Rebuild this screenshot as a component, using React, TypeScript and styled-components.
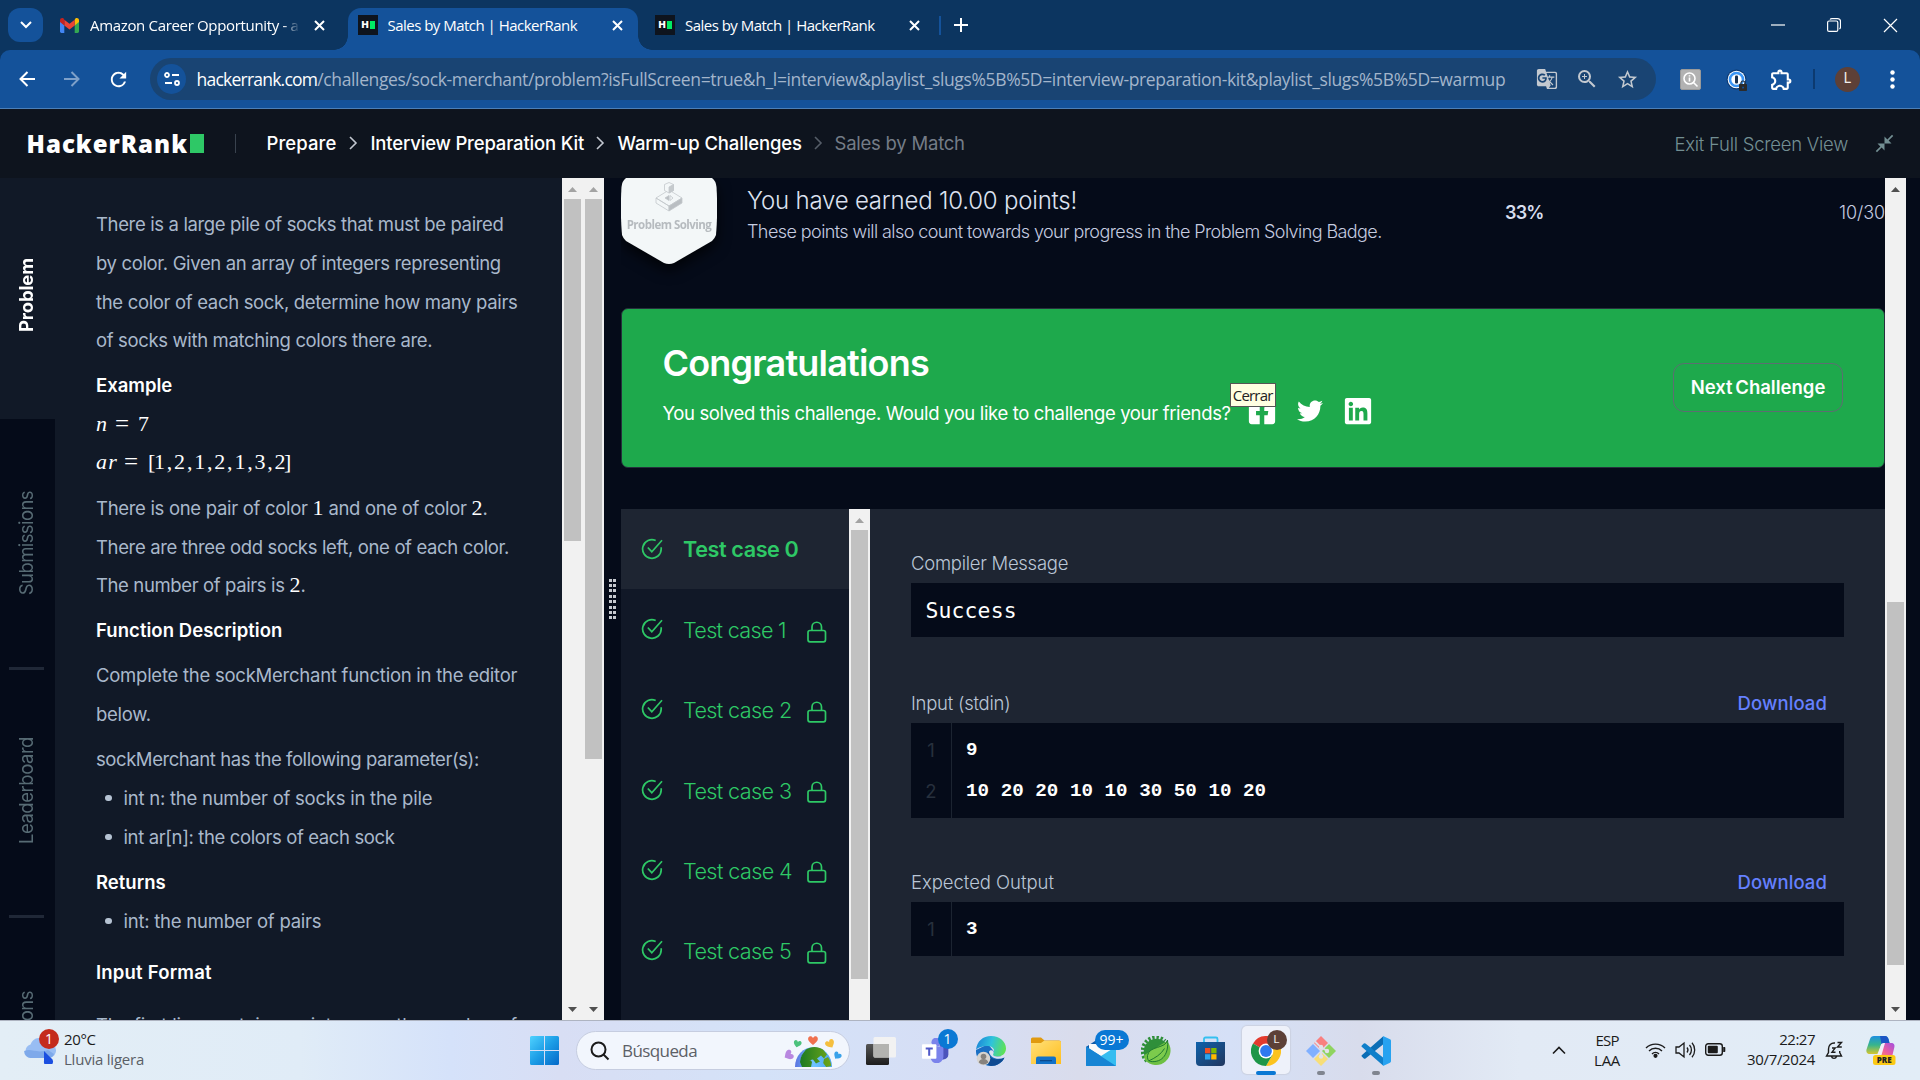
import React from 'react';
import styled, { createGlobalStyle, css } from 'styled-components';
import { FaTwitter, FaLinkedin, FaFacebookSquare } from 'react-icons/fa';
import { MdGTranslate, MdZoomIn, MdStarBorder, MdOutlineExtension, MdCloseFullscreen, MdRefresh, MdLock } from 'react-icons/md';

const ui = '"Open Sans", "Noto Sans", sans-serif';
const body = 'Inter, "Liberation Sans", sans-serif';

const Global = createGlobalStyle`
  * { box-sizing: border-box; }
  body { margin: 0; background: #050b19; overflow: hidden; }
  svg { display: block; flex: none; }
`;

const Screen = styled.div`
  width: 1920px;
  height: 1080px;
  display: grid;
  grid-template-rows: 50px 59px 69px 842px 60px;
  overflow: hidden;
  font-family: ${body};
`;

type TextProps = { $size?: number; $w?: number; $ls?: number; $ws?: number; $c?: string; $ml?: number };
const Text = styled.span<TextProps>`
  display: block;
  flex: none;
  white-space: nowrap;
  font-size: ${p => p.$size ?? 18.5}px;
  font-weight: ${p => p.$w ?? 400};
  letter-spacing: ${p => p.$ls ?? 0}px;
  word-spacing: ${p => p.$ws ?? 0}px;
  color: ${p => p.$c ?? '#fff'};
  margin-left: ${p => p.$ml ?? 0}px;
`;

/* ---------- browser chrome ---------- */

const TabStrip = styled.div`
  background: #0c3560;
  display: flex;
  align-items: center;
  padding-left: 8px;
  font-family: ${ui};
`;

const TabSearch = styled.div`
  width: 35px;
  height: 34px;
  border-radius: 12px;
  background: #14529a;
  display: flex;
  align-items: center;
  justify-content: center;
`;

const Tab = styled.div<{ $active?: boolean; $width: number; $pad: number }>`
  position: relative;
  align-self: flex-end;
  height: 42px;
  width: ${p => p.$width}px;
  padding: 0 0 8px ${p => p.$pad}px;
  display: flex;
  align-items: center;
  flex: none;
  ${p => p.$active && css`
    background: #14529a;
    border-radius: 13px 13px 0 0;
    &::before, &::after {
      content: '';
      position: absolute;
      bottom: 0;
      width: 14px;
      height: 14px;
    }
    &::before { left: -14px; background: radial-gradient(circle at 0 0, transparent 13.5px, #14529a 14px); }
    &::after { right: -14px; background: radial-gradient(circle at 100% 0, transparent 13.5px, #14529a 14px); }
  `}
`;

const TabTitle = styled(Text)<{ $width: number; $fade?: boolean }>`
  width: ${p => p.$width}px;
  overflow: hidden;
  ${p => p.$fade && css`mask-image: linear-gradient(90deg, #000 92%, transparent 100%);`}
`;

const Favicon = styled.div`
  width: 20px;
  height: 20px;
  background: #0e141e;
  display: flex;
  align-items: center;
  justify-content: center;
  flex: none;
  gap: 1px;
  color: #fff;
  font: 900 9.5px/10px ${body};
  &::after { content: ''; width: 5px; height: 8px; background: #00ea64; }
`;

const TabDivider = styled.div`
  width: 2px;
  height: 19px;
  margin-left: 17px;
  background: #14529a;
`;

const WindowButtons = styled.div`
  margin-left: auto;
  display: flex;
  align-items: center;
  gap: 42px;
  padding-right: 22px;
`;

const ToolbarBack = styled.div`
  background: #0c3560;
`;

const Toolbar = styled.div`
  height: 59px;
  background: #14529a;
  border-bottom: 1px solid #4b7fb8;
  border-radius: 10px 10px 0 0;
  display: flex;
  align-items: center;
  padding-left: 18px;
  font-family: ${ui};
  color: #fff;
`;

const NavIcons = styled.div`
  display: flex;
  gap: 26.5px;
  width: 132px;
  align-items: center;
`;

const UrlBar = styled.div`
  width: 1506px;
  height: 42px;
  border-radius: 21px;
  background: #194473;
  display: flex;
  align-items: center;
  padding: 0 17px 0 7px;
`;

const SiteInfo = styled.div`
  width: 29px;
  height: 30px;
  border-radius: 50%;
  background: #14529a;
  display: flex;
  align-items: center;
  justify-content: center;
  margin-right: 10.5px;
`;

const UrlIcons = styled.div`
  margin-left: auto;
  display: flex;
  align-items: center;
  gap: 17px;
  color: #c3c9d0;
`;

const ExtIcons = styled.div`
  display: flex;
  align-items: center;
  margin-left: 24px;
`;

const ExtSquare = styled.div`
  width: 21px;
  height: 21px;
  border-radius: 2px;
  background: #b2b2b2;
  border: 1px solid #9a9a9a;
  display: flex;
  align-items: center;
  justify-content: center;
`;

const PasswordExt = styled.div`
  width: 21px;
  height: 21px;
  margin-left: 25px;
  position: relative;
`;

const LockBadge = styled.div`
  position: absolute;
  right: -2px;
  bottom: -2px;
  color: #2b2b2b;
`;

const ExtDivider = styled.div`
  width: 2px;
  height: 20px;
  margin: 0 20px 0 19px;
  background: #0c3a70;
`;

const Avatar = styled.div<{ $size: number }>`
  width: ${p => p.$size}px;
  height: ${p => p.$size}px;
  border-radius: 50%;
  background: #5d4037;
  color: #f2eeec;
  display: flex;
  align-items: center;
  justify-content: center;
  font: 400 ${p => p.$size * 0.55}px/1 Roboto, sans-serif;
`;

/* ---------- page header ---------- */

const Header = styled.div`
  background: #0e141e;
  display: flex;
  align-items: center;
  padding: 0 25px 0 26.5px;
`;

const Logo = styled.div`
  display: flex;
  align-items: center;
  width: 208.5px;
  &::after {
    content: '';
    width: 14px;
    height: 19px;
    background: #2ec866;
    margin-left: 1.5px;
  }
`;

const LogoText = styled(Text)`
  font-family: ${ui};
`;

const Crumbs = styled.div`
  display: flex;
  align-items: center;
  border-left: 1px solid #39424e;
  height: 19px;
`;

const Crumb = styled(Text)<{ $width: number }>`
  width: ${p => p.$width}px;
  padding-bottom: 1px;
`;

const ExitLink = styled.div`
  margin-left: auto;
  display: flex;
  align-items: center;
  gap: 26px;
  color: #738f93;
`;

/* ---------- content ---------- */

const Content = styled.div`
  display: flex;
  background: #050b19;
  min-height: 0;
`;

const SideTabs = styled.div`
  width: 55px;
  height: 842px;
  overflow: hidden;
  display: flex;
  flex-direction: column;
  align-items: center;
  background: #050b19;
`;

const SideTab = styled.div<{ $h: number; $active?: boolean; $up?: number }>`
  width: 55px;
  height: ${p => p.$h}px;
  flex: none;
  display: flex;
  align-items: center;
  justify-content: center;
  padding: 0 3px ${p => p.$up ?? 0}px 0;
  background: ${p => (p.$active ? '#111927' : 'transparent')};
  span { writing-mode: vertical-rl; transform: rotate(180deg); line-height: 24px; }
`;

const SideRule = styled.div`
  width: 35px;
  height: 3px;
  margin-right: 2px;
  flex: none;
  background: #202837;
`;

const Statement = styled.div`
  width: 507px;
  height: 842px;
  overflow: hidden;
  background: #111927;
  padding: 27.4px 0 0 41px;
`;

const Line = styled.div<{ $mt?: number; $bold?: boolean; $ls?: number }>`
  height: 38.65px;
  line-height: 38.65px;
  margin-top: ${p => p.$mt ?? 0}px;
  font-size: 18.5px;
  font-weight: ${p => (p.$bold ? 600 : 400)};
  letter-spacing: ${p => p.$ls ?? (p.$bold ? 0 : -0.3)}px;
  color: ${p => (p.$bold ? '#fff' : '#a9b8cb')};
  white-space: nowrap;
`;

const Item = styled(Line)`
  display: flex;
  align-items: center;
  padding-left: 9px;
  &::before {
    content: '';
    width: 6.5px;
    height: 6.5px;
    border-radius: 50%;
    background: #b6c3d3;
    margin-right: 12px;
  }
`;

const Formula = styled.div`
  height: 38.65px;
  display: flex;
  align-items: center;
  font: 22px/38.65px "Liberation Serif", "Times New Roman", serif;
  color: #fff;
  white-space: nowrap;
`;

const Sym = styled.span<{ $width: number; $italic?: boolean; $ls?: number; $thin?: boolean }>`
  width: ${p => p.$width}px;
  font-style: ${p => (p.$italic ? 'italic' : 'normal')};
  letter-spacing: ${p => p.$ls ?? 0}px;
  font-size: ${p => (p.$thin ? 25 : 22)}px;
`;

const Num = styled.span`
  font: 22px/20px "Liberation Serif", "Times New Roman", serif;
  letter-spacing: 0;
  color: #fff;
`;

const Track = styled.div<{ $width?: number; $h?: number }>`
  width: ${p => p.$width ?? 21}px;
  height: ${p => p.$h ?? 842}px;
  flex: none;
  background: #f1f1f1;
  display: flex;
  flex-direction: column;
  align-items: center;
  padding: 9px 0 8px;
`;

const Arrow = styled.div<{ $down?: boolean; $dim?: boolean }>`
  width: 9px;
  height: 5px;
  flex: none;
  background: ${p => (p.$dim ? '#a3a3a3' : '#505050')};
  clip-path: ${p => (p.$down ? 'polygon(0 0, 100% 0, 50% 100%)' : 'polygon(50% 0, 100% 100%, 0 100%)')};
  margin-top: ${p => (p.$down ? 'auto' : 0)};
`;

const Thumb = styled.div<{ $h: number; $mt?: number }>`
  width: 17px;
  height: ${p => p.$h}px;
  flex: none;
  margin-top: ${p => p.$mt ?? 7}px;
  background: #c1c1c1;
`;

const Splitter = styled.div`
  width: 17px;
  display: flex;
  align-items: center;
  justify-content: center;
`;

const Grip = styled.div`
  display: grid;
  grid-template-columns: 3px 3px;
  gap: 2.4px 1.5px;
  i { height: 3px; background: #c6c9cf; }
`;

const Results = styled.div`
  width: 1264px;
  height: 842px;
  overflow: hidden;
  display: flex;
  flex-direction: column;
`;

const PointsRow = styled.div`
  height: 130px;
  display: flex;
  align-items: flex-start;
  flex: none;
`;

const BadgeShadow = styled.div`
  filter: drop-shadow(0 6px 7px rgba(0, 0, 0, 0.75));
`;

const Badge = styled.div`
  width: 96px;
  height: 87px;
  background: #f3f7f8;
  clip-path: path('M5 0 L91 0 Q95 3 95.5 9 Q97 34 95 57 Q94 60 91 63 L53 85 Q48 87 43 85 L5 63 Q2 60 1 57 Q-1 34 0.5 9 Q1 3 5 0 Z');
  display: flex;
  flex-direction: column;
  align-items: center;
  padding-top: 4px;
`;

const BadgeText = styled(Text)`
  font-family: ${ui};
  line-height: 14px;
  margin-top: 6px;
`;

const PointsText = styled.div`
  margin-left: 30px;
  width: 758px;
  padding-top: 8px;
  display: flex;
  flex-direction: column;
  gap: 6px;
`;

const ScoreRow = styled.div`
  flex: 1;
  display: flex;
  justify-content: space-between;
  padding-top: 24px;
`;

const Congrats = styled.div`
  width: 1264px;
  height: 160px;
  flex: none;
  margin-bottom: 41px;
  border: 1px solid #26303c;
  border-radius: 7px;
  background: #1ea94c;
  display: flex;
  align-items: center;
  justify-content: space-between;
  padding: 0 41px 2px 40.5px;
`;

const CongratsText = styled.div`
  padding-bottom: 6px;
`;

const Share = styled.div`
  display: flex;
  align-items: center;
  height: 30px;
  margin-top: 13px;
  color: #fff;
`;

const ShareIcon = styled.div<{ $ml: number }>`
  position: relative;
  margin-left: ${p => p.$ml}px;
  margin-top: -4px;
`;

const Tooltip = styled.div`
  position: absolute;
  left: -17px;
  top: -13px;
  width: 46px;
  height: 24px;
  background: #ffffe1;
  border: 1px solid #555;
  display: flex;
  align-items: center;
  justify-content: center;
  font-family: ${ui};
`;

const NextButton = styled.div`
  width: 170px;
  height: 49px;
  border: 1px solid #5c6e71;
  border-radius: 11px;
  display: flex;
  align-items: center;
  justify-content: center;
`;

const TestPanel = styled.div`
  display: flex;
  height: 511px;
  flex: none;
`;

const CaseList = styled.div`
  width: 228px;
  background: #111827;
  overflow: hidden;
`;

const Case = styled.div<{ $active?: boolean }>`
  height: 80.2px;
  padding-left: 20px;
  display: flex;
  align-items: center;
  background: ${p => (p.$active ? '#1e2532' : 'transparent')};
`;

const CaseName = styled(Text)<{ $low: boolean }>`
  width: 124px;
  margin-left: 20px;
  padding-top: ${p => (p.$low ? 2 : 0)}px;
`;

const LockSlot = styled.div`
  padding-top: 5px;
`;

const Detail = styled.div`
  width: 1015px;
  background: #1e2532;
  padding: 42px 41px 0;
`;

const LabelRow = styled.div<{ $mt?: number }>`
  height: 24px;
  margin: ${p => p.$mt ?? 0}px 0 8px;
  padding-right: 17px;
  display: flex;
  align-items: center;
  justify-content: space-between;
`;

const Message = styled.div`
  height: 54px;
  background: #050b19;
  padding-left: 14.5px;
  display: flex;
  align-items: center;
  font: 21.4px "DejaVu Sans Mono", monospace;
  letter-spacing: 0.15px;
  color: #fff;
`;

const Code = styled.div`
  background: #050b19;
  background-image: linear-gradient(#1c2431, #1c2431);
  background-size: 1px 100%;
  background-position: 40px 0;
  background-repeat: no-repeat;
  padding: 6px 0 7px;
`;

const CodeRow = styled.div`
  height: 41px;
  display: grid;
  grid-template-columns: 55px 1fr;
  align-items: center;
  font: 700 19.2px "Liberation Mono", monospace;
  letter-spacing: 0.03px;
  color: #fff;
  white-space: pre;
`;

const LineNo = styled.span`
  width: 40px;
  text-align: center;
  font: 400 18.5px ${body};
  color: #27303d;
`;

/* ---------- taskbar ---------- */

const Taskbar = styled.div`
  border-top: 1px solid #aeb4c1;
  background: linear-gradient(90deg, #e3eef6 0, #e0ecf7 300px, #d5e2fa 450px, #d8def4 560px, #d4e2f8 760px, #d6def5 960px, #d9dcec 1080px, #d5e0f7 1230px, #d8dcec 1360px, #e2eaf5 1520px, #e2edf7 100%);
  display: flex;
  align-items: center;
  font-family: ${ui};
  color: #1b1b1b;
`;

const Weather = styled.div`
  width: 517px;
  height: 59px;
  padding: 0 0 3px 24px;
  display: flex;
  align-items: center;
`;

const WeatherIcon = styled.div`
  position: relative;
  width: 40px;
`;

const CountBadge = styled.div<{ $w: number; $x: number; $y: number; $bg: string }>`
  position: absolute;
  left: ${p => p.$x}px;
  top: ${p => p.$y}px;
  width: ${p => p.$w}px;
  height: 20px;
  border-radius: 10px;
  background: ${p => p.$bg};
  color: #fff;
  font: 400 14px/20px ${ui};
  text-align: center;
`;

const TwoLines = styled.div<{ $align: string; $ml?: number; $up: number }>`
  display: flex;
  flex-direction: column;
  align-items: ${p => p.$align};
  line-height: 20px;
  padding-bottom: ${p => p.$up}px;
  margin-left: ${p => p.$ml ?? 0}px;
`;

const Slot = styled.div<{ $on?: boolean; $run?: boolean }>`
  width: 55px;
  height: 59px;
  flex: none;
  display: flex;
  align-items: center;
  justify-content: center;
  position: relative;
  ${p => p.$on && css`
    &::before {
      content: '';
      position: absolute;
      left: 4px; right: 3px; top: 5px; bottom: 6px;
      border-radius: 5px;
      background: #eef1fa;
      box-shadow: 0 0 1px 1px #ccd2e2;
    }
  `}
  ${p => (p.$on || p.$run) && css`
    &::after {
      content: '';
      position: absolute;
      left: 50%;
      bottom: 5px;
      width: ${p.$on ? 20 : 8}px;
      height: 4px;
      margin-left: ${p.$on ? -9.5 : -3.5}px;
      border-radius: 2px;
      background: ${p.$on ? '#0a78d4' : '#80858f'};
    }
  `}
`;

const Layer = styled.div`
  position: relative;
`;

const AvatarBadge = styled.div`
  position: absolute;
  left: 16px;
  top: -6px;
`;

const SearchPill = styled.div`
  width: 274px;
  height: 39px;
  margin: 0 3px 0 4px;
  border-radius: 20px;
  background: #f2f6fd;
  border: 1px solid #c6cde0;
  display: flex;
  align-items: center;
  padding: 0 7px 0 13px;
  overflow: hidden;
`;

const Doodle = styled.div`
  margin-left: auto;
`;

const Tray = styled.div`
  margin-left: auto;
  display: flex;
  align-items: center;
  padding-right: 24px;
`;

const TrayIcons = styled.div`
  display: flex;
  gap: 9px;
  margin: 0 21px 2px 25px;
  align-items: center;
`;

const Bell = styled.div`
  margin: 0 22px 1px 10px;
`;

/* ---------- drawings ---------- */

const Cross = ({ s = 10, w = 2 }: { s?: number; w?: number }) => (
  <svg width={s + 2} height={s + 2} viewBox={`-1 -1 ${s + 2} ${s + 2}`} stroke="#fff" strokeWidth={w}>
    <path d={`M0 0L${s} ${s}M${s} 0L0 ${s}`} />
  </svg>
);

const Gmail = () => (
  <svg width="19" height="15" viewBox="0 0 19 15">
    <path d="M0 3v10.5A1.4 1.4 0 0 0 1.4 15H4.300V7z" fill="#4285f4" />
    <path d="M19 3v10.500a1.400 1.400 0 0 1-1.400 1.500H14.700V7z" fill="#34a853" />
    <path d="M14.700 1.800V7.500L19 4V2.200c0-2-2.200-2.800-3.600-1.700z" fill="#fbbc04" />
    <path d="M4.300 7.500V1.800l5.200 4 5.200-4v5.700l-5.200 4z" fill="#ea4335" />
    <path d="M0 2.200V4l4.300 3.500V1.800L3.600.5C2.200-.6 0 .2 0 2.200z" fill="#c5221f" />
  </svg>
);

const Chevron = ({ c = '#c2c7d0' }: { c?: string }) => (
  <svg width="9" height="15" viewBox="0 0 9 15" fill="none" stroke={c} strokeWidth="1.6"><path d="M1 1l6 6-6 6" /></svg>
);

const CheckIcon = () => (
  <svg width="22" height="22" viewBox="0 0 22 22" fill="none" stroke="#2ec866" strokeWidth="1.700">
    <path d="M20.200 9.200v1.800A9.300 9.300 0 1 1 14.700 2.500" /><path d="M6.800 9.500l4 4.200L21 2.200" />
  </svg>
);

const LockIcon = () => (
  <svg width="20" height="22" viewBox="0 0 20 22" fill="none" stroke="#2ec866" strokeWidth="1.700">
    <rect x="1" y="9.500" width="17.500" height="11.300" rx="2" /><path d="M5 9.500V6a4.750 4.750 0 0 1 9.500 0v3.500" />
  </svg>
);

const BadgeArt = () => (
  <svg width="30" height="30" viewBox="0 0 30 30" fill="none" stroke="#c3c8cb" strokeWidth="0.800">
    <path d="M2 16l13-8 13 8-13 8z" /><path d="M2 16v5l13 8v-5z" />
    <path d="M28 16v5l-13 8v-5z" fill="#b9bec2" />
    <path d="M10.500 2.500L15 .500l4.500 2v6L15 11l-4.500-2.500z" fill="#f3f7f8" /><path d="M15 5l4.500-2.500v6L15 11z" fill="#c5cacd" />
    <path d="M11 16l4-2.500v5z" fill="#b9bec2" /><path d="M16 13.500l3 2.500-3 2.500z" />
  </svg>
);

const WindowsLogo = () => (
  <svg width="30" height="30" viewBox="0 0 30 30">
    <defs><linearGradient id="win" x1="0" y1="0" x2="1" y2="1"><stop offset="0" stopColor="#4fd2ff" /><stop offset=".5" stopColor="#1c9de6" /><stop offset="1" stopColor="#0468c8" /></linearGradient></defs>
    <path fill="url(#win)" d="M1.500 0H14v14H0V1.500A1.500 1.500 0 0 1 1.500 0zM15 0h12.500A1.500 1.500 0 0 1 29 1.500V14H15zM0 15h14v14H1.500A1.500 1.500 0 0 1 0 27.500zM15 15h14v12.500a1.500 1.500 0 0 1-1.500 1.500H15z" />
  </svg>
);

const heart = 'M0-1.800C-1.500-5.500-6-3.500-4.600.2-3.800 2.200-1.500 3.400 0 5 1.500 3.400 3.800 2.200 4.600.2 6-3.500 1.500-5.500 0-1.800z';
const EarthDoodle = () => (
  <svg width="58" height="34" viewBox="0 0 58 34">
    <defs><linearGradient id="sea" x1="0" x2="1"><stop offset="0" stopColor="#5b74e0" /><stop offset=".5" stopColor="#6fc4ff" /><stop offset="1" stopColor="#4ba3f2" /></linearGradient>
      <linearGradient id="land" x1="0" x2="1"><stop offset="0" stopColor="#1c7a22" /><stop offset="1" stopColor="#6fa61a" /></linearGradient></defs>
    <path d="M11 33a18.500 20 0 0 1 37 0z" fill="url(#sea)" />
    <path d="M22 15.500c5-3.500 12-3.500 17 0l4 5-3 4-3-3-4 3 3 3-4 2-3-4-5 1-4-3-3-1 2-3zM17 23c4-1 9 2 11 5l-1 5h-9l-2-5zM40 25l4-2c2 3 3 6 3.200 9l-5 1-3-4z" fill="url(#land)" />
    <path d={heart} fill="#f0714f" transform="translate(29 6)" />
    <path d={heart} fill="#4cc27c" transform="translate(13.500 9.500) rotate(15) scale(.8)" />
    <path d={heart} fill="#f5bf3f" transform="translate(46 9.500) rotate(-30) scale(.95)" />
    <path d={heart} fill="#b887e0" transform="translate(5 21) rotate(60) scale(1)" />
    <path d={heart} fill="#3aa2ea" transform="translate(53.500 21.500) rotate(35) scale(.8)" />
  </svg>
);

const TaskView = () => (
  <svg width="30" height="28" viewBox="0 0 30 28">
    <defs><linearGradient id="tv" x1="0" y1="0" x2="0" y2="1"><stop offset="0" stopColor="#555" /><stop offset="1" stopColor="#1d1d1d" /></linearGradient></defs>
    <rect x="0" y="7" width="23" height="21" rx="1.500" fill="url(#tv)" />
    <rect x="7.500" y="0" width="22.500" height="20.500" rx="1.500" fill="#f2f2f2" />
    <path d="M7.500 7H23v13.500H9A1.500 1.500 0 0 1 7.500 19z" fill="#b3b3b0" />
  </svg>
);

const Teams = () => (
  <svg width="28" height="25" viewBox="0 0 34 30">
    <circle cx="25" cy="7" r="4" fill="#5059c9" />
    <path d="M22 10h10v10a6 6 0 0 1-6 6h-4z" fill="#4b53bc" />
    <circle cx="17" cy="5" r="5.500" fill="#7b83eb" />
    <path d="M10 10h16v12.500A8 8 0 0 1 18 30.500 8 8 0 0 1 10 23z" fill="#7b83eb" />
    <rect x="0" y="7.500" width="17.500" height="17.500" rx="1" fill="#fff" />
    <path d="M4.500 11.500h8.600v2.300H10v7.700H7.500v-7.700h-3z" fill="#5059c9" />
  </svg>
);

const Edge = () => (
  <svg width="30" height="30" viewBox="0 0 30 30">
    <defs><linearGradient id="eg" x1="0" y1=".3" x2="1" y2=".5"><stop offset="0" stopColor="#1b86d8" /><stop offset=".5" stopColor="#2fc3dc" /><stop offset="1" stopColor="#5fe254" /></linearGradient></defs>
    <path d="M0 14a15 15 0 0 0 15 16c6 0 11-3 13.500-8.500L20 18 12 8z" fill="#1a6fc4" />
    <path d="M0 14C1 5 7 0 15 0c9 0 15 6 15 12.500 0 5-4 8-8 8-4 0-6.500-1.200-5-3 3-3.500-.5-7.500-5-7.500C6.500 10 1 12 0 14z" fill="url(#eg)" />
    <path d="M28.500 21.500C26 27 20.500 30 15 30 9 29 9 20 13 15.500c-1 6 6 10.500 15.500 6z" fill="#0f4a91" />
    <path d="M17.500 17.500C16 19.800 19 20.500 22 20.500c3.500 0 6-1.500 7.500-3.500 0 2-.3 3-1 4.500-7 3-14 .5-15.500-5.500.5-3 6-2 4.500 1.500z" fill="#dbe0f0" />
    <circle cx="7.500" cy="22.500" r="6.800" fill="#d6d3cf" /><circle cx="7.500" cy="20.500" r="2.800" fill="#86827e" /><path d="M2.800 26.500a4.700 3.500 0 0 1 9.400 0 6.800 6.800 0 0 1-9.400 0z" fill="#86827e" />
  </svg>
);

const Folder = () => (
  <svg width="30" height="28" viewBox="0 0 30 28">
    <defs><linearGradient id="fo" x1="0" y1="0" x2="1" y2="1"><stop offset="0" stopColor="#ffe07a" /><stop offset="1" stopColor="#ffbe1e" /></linearGradient></defs>
    <path d="M0 2A1.500 1.500 0 0 1 1.500.5H10l3.500 3H28a2 2 0 0 1 2 2V12H0z" fill="#e09a10" />
    <path d="M0 6h10l3-2.200h15.500A1.500 1.500 0 0 1 30 5.300V27H0z" fill="url(#fo)" />
    <path d="M5 27v-5.500A2 2 0 0 1 7 19.500h16a2 2 0 0 1 2 2V27z" fill="#1272c8" /><path d="M9 23h12v1.300H9z" fill="#0b4a8c" />
  </svg>
);

const Mail = () => (
  <svg width="30" height="30" viewBox="0 0 30 30">
    <path d="M0 11L15 1l15 10v4H0z" fill="#0d5aa8" /><path d="M3 8h24v9l-12 8L3 16z" fill="#fafafa" />
    <path d="M0 10.500L19 22.500 30 30H0z" fill="#1b8ad8" /><path d="M30 10.500V30L0 29.500z" fill="#36bdf0" /><path d="M0 10.500L30 30H1.500A1.500 1.500 0 0 1 0 28.500z" fill="#1785d4" />
  </svg>
);

const Spring = () => (
  <svg width="30" height="30" viewBox="0 0 30 30">
    <path d="M6 25A13.300 13.300 0 0 1 24 5" fill="none" stroke="#2f8f3a" strokeWidth="4" strokeDasharray="2.300 1.780" />
    <circle cx="15.500" cy="15.500" r="12.800" fill="#2f8f3a" />
    <path d="M26 5A14.500 14.500 0 1 1 4 24c-1-2-1-4-.5-5z" fill="#6ec043" />
    <path d="M26.500 4C25 13 8 9.500 6.500 19.500 6 23 7.500 25 9.500 25.500 22 27 28 17 26.500 4z" fill="#7ccb4c" stroke="#1f7a31" strokeWidth="1" />
    <path d="M7.500 25C14 22 20 18.500 23.500 12.500" stroke="#1f7a31" fill="none" strokeWidth="1" />
  </svg>
);

const Store = () => (
  <svg width="30" height="30" viewBox="0 0 30 30">
    <defs><linearGradient id="st" x1="0" y1="0" x2="1" y2="1"><stop offset="0" stopColor="#0f62ab" /><stop offset="1" stopColor="#21365e" /></linearGradient></defs>
    <path d="M8 7V3a1.500 1.500 0 0 1 1.500-1.500h10.500A1.500 1.500 0 0 1 21.500 3v4" fill="none" stroke="#35c0f0" strokeWidth="1.800" />
    <path d="M0 6h29v20a4 4 0 0 1-4 4H4a4 4 0 0 1-4-4z" fill="url(#st)" />
    <path d="M9 12h5.300v5.300H9z" fill="#f25022" /><path d="M15.200 12h5.300v5.300h-5.300z" fill="#7fba00" /><path d="M9 18.200h5.300v5.300H9z" fill="#2ba6ee" /><path d="M15.200 18.200h5.300v5.300h-5.300z" fill="#ffb900" />
  </svg>
);

const Chrome = () => (
  <svg width="30" height="30" viewBox="0 0 30 30">
    <path d="M15 15L2 7.500A15 15 0 0 1 28 7.500z" fill="#e33b2e" /><path d="M15 15l13-7.500A15 15 0 0 1 15 30l6.500-11.300z" fill="#fcc31e" />
    <path d="M2 7.500A15 15 0 0 0 15 30l6.500-11.300L15 15z" fill="#1e9648" /><path d="M15 8h13.200A15 15 0 0 1 30 15l-8.500 3.700z" fill="#fcc31e" />
    <circle cx="15" cy="15" r="7.400" fill="#fff" /><circle cx="15" cy="15" r="5.900" fill="#2f79ee" />
  </svg>
);

const GitIcon = () => (
  <svg width="30" height="30" viewBox="0 0 30 30">
    <path d="M15 0l7 7-7 7-7-7z" fill="#f98080" /><path d="M15 16l7 7-7 7-7-7z" fill="#f7de78" /><path d="M7 8l7 7-7 7-7-7z" fill="#80b0ff" /><path d="M23 8l7 7-7 7-7-7z" fill="#8fd460" />
    <path d="M9 5.500l3.500 3.500 2.500 2 6 4M15 11v10" stroke="#dfe0ea" strokeWidth="1.800" fill="none" /><circle cx="15" cy="11" r="2.200" fill="#e2e2ea" /><circle cx="15" cy="20.500" r="2.200" fill="#e2e2ea" /><circle cx="21" cy="15" r="2.200" fill="#e2e2ea" />
  </svg>
);

const VsCode = () => (
  <svg width="30" height="30" viewBox="0 0 30 30">
    <path d="M22 8.500L4.500 22.500a1.300 1.300 0 0 1-1.700 0l-1.800-1.700a1.300 1.300 0 0 1 0-1.900L22 .5z" fill="#0a6db5" />
    <path d="M22 21.500L4.500 7.500a1.300 1.300 0 0 0-1.700 0L1 9.200a1.300 1.300 0 0 0 0 1.900L22 29.500z" fill="#0f7fca" />
    <path d="M22 0l7 3.200a1.800 1.800 0 0 1 1 1.700v20.200a1.800 1.800 0 0 1-1 1.700L22 30z" fill="#27a2f0" />
  </svg>
);

const Copilot = () => (
  <svg width="30" height="29" viewBox="0 0 30 29">
    <defs><linearGradient id="cp1" x1="0" y1="0" x2="0" y2="1"><stop offset="0" stopColor="#1d8fe0" /><stop offset=".5" stopColor="#37b58c" /><stop offset="1" stopColor="#d6c62e" /></linearGradient>
      <linearGradient id="cp2" x1="1" y1="0" x2="0" y2="1"><stop offset="0" stopColor="#a24fe0" /><stop offset=".6" stopColor="#ef5f9c" /><stop offset="1" stopColor="#f9955c" /></linearGradient></defs>
    <path d="M8 0h11c2 0 3 1.500 3.500 3l1 4H18c-2 0-3 1-3.500 3l-2 8H4c-3 0-4-2-3.500-4.500L4 3c.6-2 2-3 4-3z" fill="url(#cp1)" />
    <path d="M14 0h5c2 0 3 1.500 3.500 3l1 4H18l-2.500 1z" fill="#1c55c4" />
    <path d="M19 7h6c3 0 4 2 3.300 4.500L26 21H13l3-11c.5-2 1.500-3 3-3z" fill="url(#cp2)" />
    <path d="M15.500 8c1-1 2-1 3.500-1l-3.500 12H11z" fill="#f3eef8" />
    <rect x="7" y="19" width="22.500" height="10" rx="2.500" fill="#fbc914" />
    <text x="18.200" y="27.200" textAnchor="middle" fontFamily="Open Sans" fontWeight="800" fontSize="8" fill="#222">PRE</text>
  </svg>
);

/* ---------- page ---------- */

const cases = [-0.4, -0.7, -0.62, -0.62, -0.6, -0.62];

export default function App() {
  return (
    <Screen>
      <Global />
      <TabStrip>
        <TabSearch>
          <svg width="12" height="8" viewBox="0 0 12 8" fill="none" stroke="#fff" strokeWidth="2"><path d="M1 1l5 5 5-5" /></svg>
        </TabSearch>
        <Tab $width={305} $pad={17}>
          <Gmail />
          <TabTitle $size={15} $ls={-0.33} $ml={11} $width={210} $fade>Amazon Career Opportunity - a</TabTitle>
          <Text $ml={14}><Cross s={9} /></Text>
        </Tab>
        <Tab $active $width={290} $pad={10}>
          <Favicon>H</Favicon>
          <TabTitle $size={15} $ls={-0.52} $ml={9.5} $width={224}>Sales by Match | HackerRank</TabTitle>
          <Cross s={9} />
        </Tab>
        <Tab $width={284} $pad={17}>
          <Favicon>H</Favicon>
          <TabTitle $size={15} $ls={-0.52} $ml={10} $width={224}>Sales by Match | HackerRank</TabTitle>
          <Cross s={9} />
        </Tab>
        <TabDivider />
        <Text $ml={13}>
          <svg width="14" height="14" viewBox="0 0 14 14" stroke="#fff" strokeWidth="2"><path d="M7 0v14M0 7h14" /></svg>
        </Text>
        <WindowButtons>
          <svg width="14" height="14" viewBox="0 0 14 14" stroke="#fff" strokeWidth="1.200"><path d="M0 7h14" /></svg>
          <svg width="14" height="14" viewBox="0 0 14 14" fill="none" stroke="#fff" strokeWidth="1.200"><rect x=".6" y="3" width="10.200" height="10.400" rx="1.500" /><path d="M3 1.500C3.500.8 4 .6 5 .6h5.500a3 3 0 0 1 3 3V9c0 1-.3 1.500-1 2" /></svg>
          <Cross s={13} w={1.2} />
        </WindowButtons>
      </TabStrip>

      <ToolbarBack>
        <Toolbar>
          <NavIcons>
            <svg width="18" height="18" viewBox="0 0 18 18" fill="none" stroke="#fff" strokeWidth="2"><path d="M17 9H3M9.500 2L2.500 9l7 7" /></svg>
            <svg width="18" height="18" viewBox="0 0 18 18" fill="none" stroke="#7ea0c9" strokeWidth="2"><path d="M1 9h14M8.500 2l7 7-7 7" /></svg>
            <MdRefresh size={23} />
          </NavIcons>
          <UrlBar>
            <SiteInfo>
              <svg width="16" height="14" viewBox="0 0 16 14" fill="none" stroke="#fff" strokeWidth="1.800"><circle cx="3" cy="3" r="2" /><path d="M8 3h7M1 11h7" /><circle cx="13" cy="11" r="2" /></svg>
            </SiteInfo>
            <Text $size={17.5} $ls={-0.77}>hackerrank.com</Text>
            <Text $size={17.5} $ls={-0.365} $c="#a3b5cb">/challenges/sock-merchant/problem?isFullScreen=true&amp;h_l=interview&amp;playlist_slugs%5B%5D=interview-preparation-kit&amp;playlist_slugs%5B%5D=warmup</Text>
            <UrlIcons>
              <MdGTranslate size={22} />
              <MdZoomIn size={24} />
              <MdStarBorder size={23} />
            </UrlIcons>
          </UrlBar>
          <ExtIcons>
            <ExtSquare>
              <svg width="17" height="17" viewBox="0 0 17 17" fill="none" stroke="#fff" strokeWidth="1.600"><circle cx="7.500" cy="7.500" r="5.500" /><path d="M11.500 11.500l4 4M7.500 6.500v4M7.500 4.200v1.300" /></svg>
            </ExtSquare>
            <PasswordExt>
              <svg width="21" height="21" viewBox="0 0 21 21"><circle cx="10.500" cy="10.500" r="10" fill="#0d3a73" /><circle cx="10.500" cy="10.500" r="8.800" fill="#fff" /><circle cx="10.500" cy="10.500" r="6.500" fill="#fff" stroke="#3a95f5" strokeWidth="2.600" /><rect x="9" y="6.500" width="3" height="8" rx="1" fill="#17304f" /></svg>
              <LockBadge><MdLock size={12} /></LockBadge>
            </PasswordExt>
            <Text $ml={22}><MdOutlineExtension size={25} /></Text>
            <ExtDivider />
            <Avatar $size={25}>L</Avatar>
            <Text $ml={30}>
              <svg width="5" height="19" viewBox="0 0 5 19" fill="#fff"><circle cx="2.500" cy="2.500" r="2.200" /><circle cx="2.500" cy="9.500" r="2.200" /><circle cx="2.500" cy="16.500" r="2.200" /></svg>
            </Text>
          </ExtIcons>
        </Toolbar>
      </ToolbarBack>

      <Header>
        <Logo><LogoText $size={24} $w={800} $ls={1.02}>HackerRank</LogoText></Logo>
        <Crumbs>
          <Crumb $width={82} $ml={30.5} $w={500} $ls={0.09}>Prepare</Crumb>
          <Chevron />
          <Crumb $width={225} $ml={13} $w={500} $ls={-0.18}>Interview Preparation Kit</Crumb>
          <Chevron />
          <Crumb $width={196} $ml={13} $w={500} $ls={-0.13}>Warm-up Challenges</Crumb>
          <Chevron c="#555d68" />
          <Crumb $width={140} $ml={12} $ls={-0.23} $c="#747c87">Sales by Match</Crumb>
        </Crumbs>
        <ExitLink>
          <Text $w={300} $ls={-0.26} $c="#738f93">Exit Full Screen View</Text>
          <MdCloseFullscreen size={21} />
        </ExitLink>
      </Header>

      <Content>
        <SideTabs>
          <SideTab $h={241} $up={6} $active><Text $w={700} $ls={-0.14}>Problem</Text></SideTab>
          <SideTab $h={248}><Text $ls={-0.58} $c="#576b74">Submissions</Text></SideTab>
          <SideRule />
          <SideTab $h={245} $up={4}><Text $ls={-0.46} $c="#576b74">Leaderboard</Text></SideTab>
          <SideRule />
          <SideTab $h={250} $up={4}><Text $ls={-0.5} $c="#576b74">Discussions</Text></SideTab>
        </SideTabs>
        <Statement>
          <Line $ls={-0.36}>There is a large pile of socks that must be paired</Line>
          <Line $ls={-0.35}>by color. Given an array of integers representing</Line>
          <Line $ls={-0.33}>the color of each sock, determine how many pairs</Line>
          <Line $ls={-0.35}>of socks with matching colors there are.</Line>
          <Line $bold $mt={6} $ls={0}>Example</Line>
          <Formula><Sym $width={19} $italic>n</Sym><Sym $width={23} $thin>=</Sym><Sym $width={12}>7</Sym></Formula>
          <Formula><Sym $width={28} $italic $ls={1.2}>ar</Sym><Sym $width={24} $thin>=</Sym><Sym $width={6}>[</Sym><Sym $width={130} $ls={1.8}>1,2,1,2,1,3,2</Sym><Sym $width={8}>]</Sym></Formula>
          <Line $mt={7} $ls={-0.31}>There is one pair of color <Num>1</Num> and one of color <Num>2</Num>.</Line>
          <Line $ls={-0.36}>There are three odd socks left, one of each color.</Line>
          <Line $ls={-0.38}>The number of pairs is <Num>2</Num>.</Line>
          <Line $bold $mt={6.5} $ls={0.05}>Function Description</Line>
          <Line $mt={6.5} $ls={-0.25}>Complete the sockMerchant function in the editor</Line>
          <Line>below.</Line>
          <Line $mt={6.5} $ls={-0.43}>sockMerchant has the following parameter(s):</Line>
          <Item $ls={-0.24}>int n: the number of socks in the pile</Item>
          <Item $ls={-0.38}>int ar[n]: the colors of each sock</Item>
          <Line $bold $mt={7}>Returns</Line>
          <Item $ls={-0.24}>int: the number of pairs</Item>
          <Line $bold $mt={13} $ls={0.2}>Input Format</Line>
          <Line $mt={14} $ls={-0.2}>The first line contains an integer n, the number of</Line>
        </Statement>
        <Track><Arrow $dim /><Thumb $h={342} /><Arrow $down /></Track>
        <Track><Arrow $dim /><Thumb $h={560} /><Arrow $down /></Track>
        <Splitter><Grip>{Array.from({ length: 16 }, (_, i) => <i key={i} />)}</Grip></Splitter>
        <Results>
          <PointsRow>
            <BadgeShadow>
              <Badge><BadgeArt /><BadgeText $size={11.5} $w={700} $ls={-0.52} $c="#b6bbbf">Problem Solving</BadgeText></Badge>
            </BadgeShadow>
            <PointsText>
              <Text $size={24} $w={300} $ls={-0.2} $c="#dde2f0">You have earned 10.00 points!</Text>
              <Text $size={18} $w={300} $ls={-0.58} $c="#c6cce0">These points will also count towards your progress in the Problem Solving Badge.</Text>
            </PointsText>
            <ScoreRow>
              <Text $size={18} $w={600} $ls={-0.8} $c="#d8deee">33%</Text>
              <Text $size={18} $w={300} $ls={-0.1} $c="#c6cce0">10/30</Text>
            </ScoreRow>
          </PointsRow>
          <Congrats>
            <CongratsText>
              <Text $size={36} $w={600} $ls={-0.79}>Congratulations</Text>
              <Share>
                <Text $ls={-0.355}>You solved this challenge. Would you like to challenge your friends?</Text>
                <ShareIcon $ml={16}>
                  <FaFacebookSquare size={30} />
                  <Tooltip><Text $size={15} $ls={-0.8} $c="#222">Cerrar</Text></Tooltip>
                </ShareIcon>
                <ShareIcon $ml={20}><FaTwitter size={26} /></ShareIcon>
                <ShareIcon $ml={20}><FaLinkedin size={30} /></ShareIcon>
              </Share>
            </CongratsText>
            <NextButton><Text $w={600} $ls={0} $ws={-2}>Next Challenge</Text></NextButton>
          </Congrats>
          <TestPanel>
            <CaseList>
              {cases.map((ls, i) => (
                <Case key={i} $active={i === 0}>
                  <CheckIcon />
                  <CaseName $low={i > 0} $size={21.6} $w={i === 0 ? 600 : 300} $ls={ls} $c="#2ec866">Test case {i}</CaseName>
                  {i > 0 && <LockSlot><LockIcon /></LockSlot>}
                </Case>
              ))}
            </CaseList>
            <Track $h={511}><Arrow $dim /><Thumb $h={449} /></Track>
            <Detail>
              <LabelRow><Text $w={300} $ls={-0.27} $c="#bac6d6">Compiler Message</Text></LabelRow>
              <Message>Success</Message>
              <LabelRow $mt={54}>
                <Text $w={300} $ls={-0.25} $c="#bac6d6">Input (stdin)</Text>
                <Text $w={500} $ls={0.1} $c="#6580ff">Download</Text>
              </LabelRow>
              <Code>
                <CodeRow><LineNo>1</LineNo>9</CodeRow>
                <CodeRow><LineNo>2</LineNo>10 20 20 10 10 30 50 10 20</CodeRow>
              </Code>
              <LabelRow $mt={52}>
                <Text $w={300} $ls={-0.04} $c="#bac6d6">Expected Output</Text>
                <Text $w={500} $ls={0.1} $c="#6580ff">Download</Text>
              </LabelRow>
              <Code>
                <CodeRow><LineNo>1</LineNo>3</CodeRow>
              </Code>
            </Detail>
          </TestPanel>
        </Results>
        <Track><Arrow /><Thumb $h={363} $mt={410} /><Arrow $down /></Track>
      </Content>

      <Taskbar>
        <Weather>
          <WeatherIcon>
            <svg width="32" height="30" viewBox="0 0 32 30">
              <path d="M7 24a7 7 0 0 1-.5-13.500A9.500 9.500 0 0 1 24 9a7.500 7.500 0 0 1 1 15z" fill="#98bdf3" />
              <path d="M7 24a6.500 6.500 0 0 1-6.800-7C8 14 12 20 24 16l6 4a6 6 0 0 1-5 4z" fill="#7ea9ea" />
              <path d="M20 17l7 7a4.500 4.500 0 1 1-7 3z" fill="#1b4fe0" />
            </svg>
            <CountBadge $w={20} $x={15} $y={-5} $bg="#c42b1c">1</CountBadge>
          </WeatherIcon>
          <TwoLines $align="flex-start" $up={1}>
            <Text $size={15} $ls={-0.35} $c="#1b1b1b">20°C</Text>
            <Text $size={15} $ls={-0.22} $c="#5a5f66">Lluvia ligera</Text>
          </TwoLines>
        </Weather>
        <Slot><WindowsLogo /></Slot>
        <SearchPill>
          <svg width="20" height="20" viewBox="0 0 20 20" fill="none" stroke="#1b1b1b" strokeWidth="2"><circle cx="8.500" cy="8.500" r="7" /><path d="M13.500 13.500l5 5" /></svg>
          <Text $size={17} $ls={-0.59} $c="#5c6066" $ml={12}>Búsqueda</Text>
          <Doodle><EarthDoodle /></Doodle>
        </SearchPill>
        <Slot><TaskView /></Slot>
        <Slot><Layer><Teams /><CountBadge $w={20} $x={16} $y={-9} $bg="#0a78d4">1</CountBadge></Layer></Slot>
        <Slot><Edge /></Slot>
        <Slot><Folder /></Slot>
        <Slot><Layer><Mail /><CountBadge $w={34} $x={9} $y={-6} $bg="#0a78d4">99+</CountBadge></Layer></Slot>
        <Slot><Spring /></Slot>
        <Slot><Store /></Slot>
        <Slot $on><Layer><Chrome /><AvatarBadge><Avatar $size={20}>L</Avatar></AvatarBadge></Layer></Slot>
        <Slot $run><GitIcon /></Slot>
        <Slot $run><VsCode /></Slot>
        <Tray>
          <svg width="14" height="9" viewBox="0 0 14 9" fill="none" stroke="#1b1b1b" strokeWidth="1.600"><path d="M1 7.500l6-6 6 6" /></svg>
          <TwoLines $align="center" $ml={28} $up={2}>
            <Text $size={15} $ls={-0.8} $c="#1b1b1b">ESP</Text>
            <Text $size={15} $ls={-0.3} $c="#1b1b1b">LAA</Text>
          </TwoLines>
          <TrayIcons>
            <svg width="21" height="16" viewBox="0 0 21 16" fill="none" stroke="#1b1b1b" strokeWidth="1.400"><path d="M1 6a13.500 13.500 0 0 1 19 0M4 9a9.200 9.200 0 0 1 13 0M7 12a5 5 0 0 1 7 0" /><circle cx="10.500" cy="13.800" r="1.400" fill="#1b1b1b" /></svg>
            <svg width="21" height="18" viewBox="0 0 21 18" fill="none" stroke="#1b1b1b" strokeWidth="1.300"><path d="M1 6v6h3l5 4V2L4 6zM12 6.500a4 4 0 0 1 0 5M14.500 4a7.500 7.500 0 0 1 0 10M17 1.800a11 11 0 0 1 0 14.400" /></svg>
            <svg width="21" height="13" viewBox="0 0 21 13"><rect x=".7" y=".7" width="16.600" height="11.600" rx="2.500" fill="none" stroke="#1b1b1b" strokeWidth="1.400" /><rect x="2.800" y="2.800" width="10" height="7.400" rx="1" fill="#1b1b1b" /><path d="M18.200 4h1.300a.8.800 0 0 1 .8.800v3.400a.8.800 0 0 1-.8.800h-1.300z" fill="#1b1b1b" /></svg>
          </TrayIcons>
          <TwoLines $align="flex-end" $up={4}>
            <Text $size={15} $ls={-0.5} $c="#1b1b1b">22:27</Text>
            <Text $size={15} $ls={-0.34} $c="#1b1b1b">30/7/2024</Text>
          </TwoLines>
          <Bell>
            <svg width="19" height="19" viewBox="0 0 19 19" fill="none" stroke="#1b1b1b" strokeWidth="1.400"><path d="M10 2C6 1.500 3.500 4.500 3.500 8v3.500L1.500 15h15l-1.800-3.500V10M6.500 15.500a2.600 2.600 0 0 0 5 0M12.500 1.500h4l-4 4.500h4.300M7 7h3.200L7 11.200h3.500" /></svg>
          </Bell>
          <Copilot />
        </Tray>
      </Taskbar>
    </Screen>
  );
}
